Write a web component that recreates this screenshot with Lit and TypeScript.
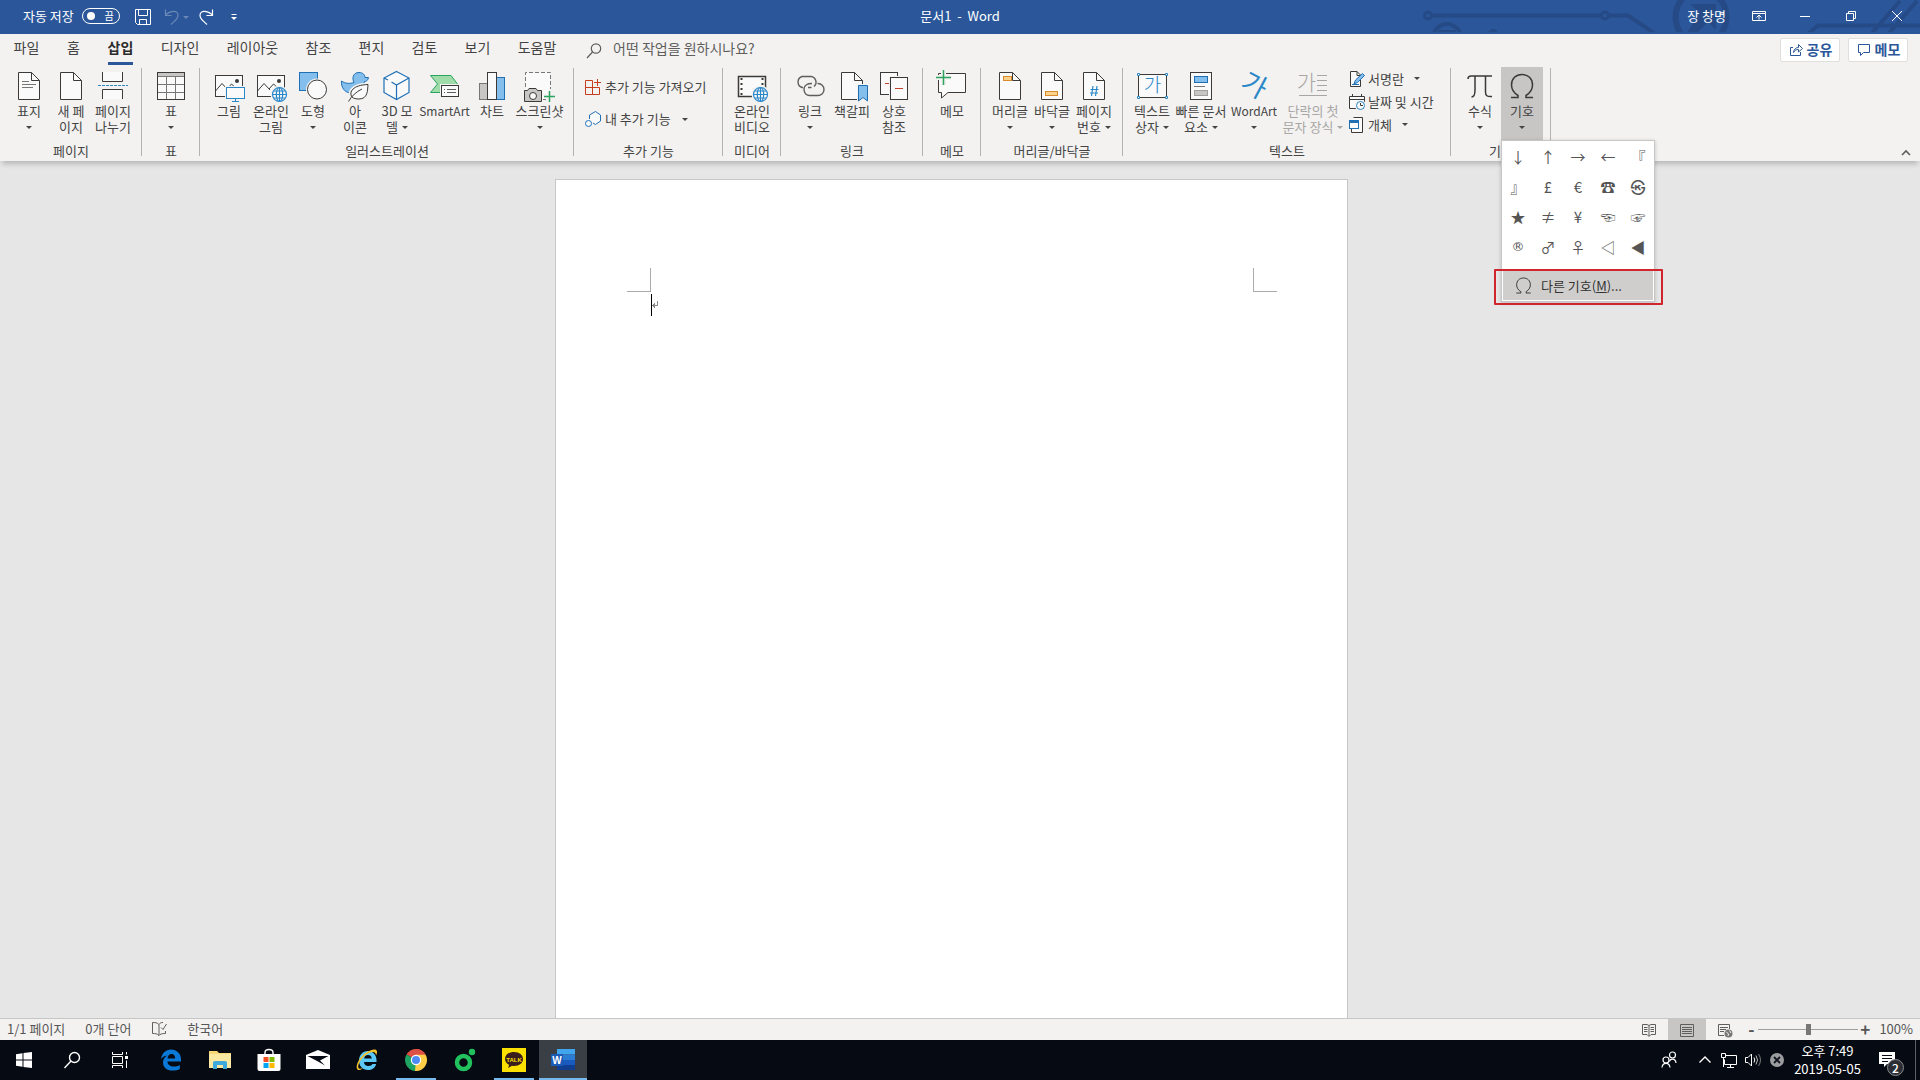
import { LitElement, html, svg, css, nothing, TemplateResult, SVGTemplateResult } from "lit";
import { customElement, property } from "lit/decorators.js";
import { classMap } from "lit/directives/class-map.js";

/* ---------- shared icon parts ---------- */

const INK = "#3b3a39";
const BLUE = "#2b88c8";
const DEEP = "#1f6fb5";
const SKY = "#83beec";
const GREEN = "#2ba55d";
const PAPER = "#fafafa";

const sheet = svg`
  <path d="M5.5 2.5H18.5L26.5 10.5V29.5H5.5Z" fill=${PAPER} stroke=${INK}/>
  <path d="M18.5 2.5V10.5H26.5" fill="none" stroke=${INK}/>`;

const globe = svg`
  <circle cx="24.5" cy="24.5" r="9" fill="#f3f2f1"/>
  <g fill=${PAPER} stroke=${BLUE} stroke-width="1.2">
    <circle cx="24.5" cy="24.5" r="7"/>
    <ellipse cx="24.5" cy="24.5" rx="3.2" ry="7"/>
    <path d="M17.5 24.5H31.5M18.5 21H30.5M18.5 28H30.5M24.5 17.5V31.5" fill="none"/>
  </g>`;

const landscape = svg`
  <rect x="2.5" y="5.5" width="27" height="21" fill=${PAPER} stroke=${INK}/>
  <path d="M2.5 21L9 13.5L15 20M14 19L18.5 14L24 19" fill="none" stroke=${INK}/>
  <circle cx="24" cy="11" r="2" fill=${INK}/>`;

const omega = svg`<path d="M5 27.5H12V25.5C8 23 5.5 19.5 5.5 15C5.5 8.5 10 4.5 16 4.5S26.5 8.5 26.5 15C26.5 19.5 24 23 20 25.5V27.5H27" fill="none" stroke=${INK} stroke-width="1.5"/>`;

const big: Record<string, SVGTemplateResult> = {
  cover: svg`${sheet}<path d="M9 11.5H16M9 14.5H23M9 17.5H20" stroke="#797775" fill="none"/>`,
  blank: sheet,
  pageBreak: svg`
    <path d="M5.5 2V11.5H25.5V2" fill=${PAPER} stroke=${INK}/>
    <path d="M5.5 29V19.5H25.5V29" fill=${PAPER} stroke=${INK}/>
    <path d="M1 15.5H31" stroke=${BLUE} stroke-dasharray="3 1"/>`,
  table: svg`
    <rect x="2.5" y="2.5" width="27" height="27" fill=${PAPER}/>
    <rect x="2.5" y="2.5" width="27" height="4" fill="#c8c6c4"/>
    <path d="M2.5 6.5H29.5M2.5 14.5H29.5M2.5 22.5H29.5M11.5 6.5V29.5M20.5 6.5V29.5" stroke="#797775"/>
    <rect x="2.5" y="2.5" width="27" height="27" fill="none" stroke=${INK}/>`,
  picture: svg`${landscape}
    <rect x="12" y="16" width="21" height="14" fill="#f3f2f1"/>
    <rect x="13.5" y="17.5" width="18" height="11" fill=${PAPER} stroke=${BLUE}/>
    <path d="M22.5 28.5V31.5M19 31.5H26" stroke=${BLUE}/>`,
  onlinePicture: svg`${landscape}${globe}`,
  shapes: svg`
    <rect x="2.5" y="2.5" width="18" height="18" fill=${SKY} stroke=${DEEP}/>
    <circle cx="20" cy="19.5" r="11" fill="#f3f2f1"/>
    <circle cx="20" cy="19.5" r="9.5" fill=${PAPER} stroke=${INK}/>`,
  icons: svg`
    <path d="M2.5 11C6 13.5 10 14 15 12.5C13 9 13.5 2.5 20 2.5C24 2.5 26 5 26 7.5L29.5 7.5C29 10.5 27 11.5 25 12C28 19 20 24 11 23C5 22 2 17 2.5 11Z" fill=${SKY} stroke=${DEEP}/>
    <path d="M13 27C9.5 22 14 15 29 14.5C28.5 20 29 29 20 29C17 29 14.5 28.5 13 27Z" fill=${PAPER} stroke="#f3f2f1" stroke-width="4"/>
    <path d="M13 27C9.5 22 14 15 29 14.5C28.5 20 29 29 20 29C17 29 14.5 28.5 13 27Z" fill=${PAPER} stroke=${INK}/>
    <path d="M9.5 31.5C13 25.5 17 22 23 19" fill="none" stroke=${INK}/>`,
  cube: svg`
    <path d="M15.5 1.5L28 8V22.5L15.5 29.5L3 22.5V8Z" fill=${PAPER} stroke=${DEEP} stroke-width="1.2"/>
    <path d="M3 8L7 10M10.5 12L15.5 15L28 8M15.5 15V29.5" fill="none" stroke=${DEEP} stroke-width="1.2"/>`,
  smartArt: svg`
    <path d="M1.5 5.5H22L28.5 14L22 22.5H1.5L8.5 14Z" fill="#9fdcaa" stroke=${GREEN}/>
    <rect x="11" y="14" width="20" height="15" fill="#f3f2f1"/>
    <rect x="12.5" y="15.5" width="17" height="11" fill=${PAPER} stroke=${INK}/>
    <path d="M15 19.5H16M18 19.5H27M15 22.5H16M18 22.5H27" stroke="#605e5c"/>`,
  chart: svg`
    <rect x="3.5" y="13.5" width="8" height="16" fill="#c8c6c4" stroke="#797775"/>
    <rect x="20.5" y="7.5" width="8" height="22" fill=${SKY} stroke=${DEEP}/>
    <rect x="11.5" y="2.5" width="9" height="27" fill=${PAPER} stroke=${INK}/>`,
  screenshot: svg`
    <path d="M1.5 17V2.5H26.5V29.5H1.5Z" fill=${PAPER}/>
    <path d="M1.5 17V2.5H26.5V19M19 29.5H22" fill="none" stroke="#797775" stroke-dasharray="4 2"/>
    <path d="M20 26.5H31M25.5 21V32" stroke="#f3f2f1" stroke-width="4"/>
    <path d="M0.5 20.5H3.5L5 18.5H12L13.5 20.5H17.5V31.5H0.5Z" fill="#c8c6c4" stroke=${INK}/>
    <circle cx="9" cy="26" r="3.5" fill=${PAPER} stroke=${INK}/>
    <path d="M20 26.5H31M25.5 21V32" stroke=${GREEN} stroke-width="1.5"/>`,
  onlineVideo: svg`
    <rect x="2.5" y="6.5" width="27" height="20" fill=${PAPER} stroke=${INK} stroke-width="1.5"/>
    <path d="M5.5 8V26M26.5 8V18" stroke=${INK} stroke-width="2" stroke-dasharray="2 3"/>
    ${globe}`,
  link: svg`
    <g fill="none" stroke="#605e5c" stroke-width="1.4">
      <path d="M9 17.5H8A5.8 5.8 0 0 1 8 6.5H17A5.7 5.7 0 0 1 20 16.5M17.5 17.5H14"/>
      <path d="M23.5 13.5H24A5.8 5.8 0 0 1 24 25.5H15.5A5.9 5.9 0 0 1 13 14.5Q14 13.5 18 13.5"/>
    </g>`,
  bookmark: svg`${sheet}
    <path d="M21 14H33V32H21Z" fill="#f3f2f1"/>
    <path d="M22.5 15.5H31.5V31L27 27.5L22.5 31Z" fill=${SKY} stroke=${DEEP}/>`,
  crossRef: svg`
    <rect x="2.5" y="2.5" width="17" height="22" fill=${PAPER} stroke=${INK}/>
    <path d="M7 13.5H11" stroke="#c8402a"/>
    <rect x="11" y="6" width="20" height="25" fill="#f3f2f1"/>
    <rect x="12.5" y="7.5" width="17" height="22" fill=${PAPER} stroke=${INK}/>
    <path d="M17 18.5H25" stroke="#c8402a"/>`,
  comment: svg`
    <path d="M2.5 3.5H29.5V22.5H12L5.5 28V22.5H2.5Z" fill=${PAPER} stroke=${INK}/>
    <path d="M0 7.5H15M7.5 0V15" stroke="#f3f2f1" stroke-width="5"/>
    <path d="M0 7.5H15M7.5 0V15" stroke=${GREEN} stroke-width="1.5"/>`,
  header: svg`${sheet}<rect x="9.5" y="6.5" width="8" height="4" fill="#fbd28b" stroke="#d88a2e"/>`,
  footer: svg`${sheet}<rect x="9.5" y="21.5" width="12" height="4" fill="#fbd28b" stroke="#d88a2e"/>`,
  pageNumber: svg`${sheet}<path d="M15 16L13.5 26M19 16L17.5 26M12.5 19.5H20.5M12 23H20" stroke=${BLUE} fill="none" stroke-width="1.2"/>`,
  textBox: svg`
    <rect x="2.5" y="4.5" width="28" height="23" fill=${PAPER} stroke=${INK}/>
    <text x="16.5" y="22" text-anchor="middle" font-size="19" font-weight="300" fill=${BLUE}>가</text>
    <path d="M1.5 3.5h2v2h-2zM29.5 3.5h2v2h-2zM1.5 26.5h2v2h-2zM29.5 26.5h2v2h-2z" fill=${PAPER} stroke=${BLUE}/>`,
  quickParts: svg`
    <rect x="5.5" y="2.5" width="21" height="27" fill=${PAPER} stroke=${INK}/>
    <rect x="9.5" y="6.5" width="13" height="6" fill=${SKY} stroke=${DEEP}/>
    <path d="M9 16.5H20" stroke="#797775"/>
    <rect x="9.5" y="20.5" width="13" height="5" fill="#c8c6c4" stroke="#a19f9d"/>`,
  wordArt: svg`<text transform="rotate(28 16 16)" x="16" y="25" text-anchor="middle" font-size="27" font-weight="400" fill=${BLUE}>가</text>`,
  dropCap: svg`
    <text x="9.5" y="20" text-anchor="middle" font-size="21" font-weight="300" fill="#a8a6a4">가</text>
    <path d="M20 5.5H30M20 10.5H30M20 15.5H30M20 20.5H30M2 25.5H30" stroke="#a8a6a4"/>`,
  equation: svg`<path d="M4 9C4 7 5 6 7 6H28M11 6V20C11 25 10 27 7.5 27M21.5 6V22C21.5 25.5 23 27 28 26.5" fill="none" stroke=${INK} stroke-width="1.5"/>`,
  symbol: omega,
};

/* 16-unit icons */
const small: Record<string, SVGTemplateResult> = {
  getAddins: svg`<g fill="none" stroke="#c43e1c"><path d="M7.5 1.5H0.5V15.5H14.5V8.5H0.5M7.5 1.5V15.5"/><path d="M12.5 0V7M9 3.5H16"/></g>`,
  myAddins: svg`<g fill=${PAPER} stroke=${DEEP}><path d="M4.5 8V4L10.5 0.5L15.5 4V10L10.5 13.5L8 12" /><circle cx="3.5" cy="12.5" r="3"/></g>`,
  signature: svg`
    <path d="M1.5 0.5H8L11.5 4V15.5H1.5Z" fill=${PAPER} stroke=${INK}/>
    <path d="M8 0.5V4.5H11.5" fill="none" stroke=${INK}/>
    <path d="M5 13L6.5 9L13.5 2.5L15.5 4.5L8.5 11.5Z" fill=${SKY} stroke=${DEEP}/><path d="M3 13.5H10" stroke=${DEEP}/>`,
  dateTime: svg`
    <path d="M0.5 2.5H15.5V14.5H0.5ZM0.5 5.5H15.5M3.5 0V3M12.5 0V3" fill=${PAPER} stroke=${INK}/>
    <circle cx="11.5" cy="11.5" r="5.5" fill="#f3f2f1"/>
    <circle cx="11.5" cy="11.5" r="4" fill=${PAPER} stroke=${BLUE}/><path d="M11.5 9V11.5H14" fill="none" stroke=${INK}/>`,
  object: svg`
    <path d="M4.5 0.5H13.5V15.5H2.5V12" fill=${PAPER} stroke=${INK}/>
    <rect x="0.5" y="3.5" width="9" height="8" fill=${PAPER} stroke=${DEEP}/><path d="M1 5H9" stroke=${DEEP} stroke-width="2"/>`,
  share: svg`<g fill="none" stroke="#2b579a"><path d="M5 6.5H2.5V14.5H12.5V11"/><path d="M5.5 11.5C6 8 8 6.5 10.5 6.5V3.5L14.5 7.5L10.5 11V8.5C8 8.5 6.5 9.5 5.5 11.5Z"/></g>`,
  note: svg`<path d="M2.5 3.5H13.5V11.5H7.5L4.5 14.5V11.5H2.5Z" fill="none" stroke="#2b579a"/>`,
  search: svg`<g fill="none" stroke="#605e5c" stroke-width="1.2"><circle cx="10" cy="5.5" r="4.7"/><path d="M6.5 9L1 15"/></g>`,
  save: svg`<path d="M0.5 0.5H15.5V15.5H2.5L0.5 13.5ZM3.5 0.5V6.5H12.5V0.5M4.5 15.5V10.5H11.5V15.5" fill="none" stroke="#fff"/>`,
  undo: svg`<path d="M1.5 0.5V6.5H7.5M1.5 6.5C5 2 14 0 14 6.5C14 10 11 11.5 7 15.5" fill="none" stroke="#6b88b8" stroke-width="1.2"/>`,
  redo: svg`<path d="M14.5 0.5V6.5H8.5M14.5 6.5C11 2 2 0 2 6.5C2 10 5 11.5 9 15.5" fill="none" stroke="#fff" stroke-width="1.2"/>`,
  more: svg`<path d="M5.5 5.5H10.5" stroke="#fff"/><path d="M5 8H11L8 11Z" fill="#fff"/>`,
  display: svg`<path d="M1.5 3.5H14.5V12.5H1.5ZM1.5 5.5H14.5M8 11.5V7.5M5.5 9.5L8 7L10.5 9.5" fill="none" stroke="#fff"/>`,
  minimize: svg`<path d="M3 8.5H13" stroke="#fff"/>`,
  restore: svg`<path d="M3.5 5.5H10.5V12.5H3.5ZM5.5 5.5V3.5H12.5V10.5H10.5" fill="none" stroke="#fff"/>`,
  close: svg`<path d="M3 3L13 13M13 3L3 13" stroke="#fff"/>`,
  proof: svg`<g fill="none" stroke="#605e5c"><path d="M8 3.5C6 1.5 4 1.5 1.5 1.5V12.5C4 12.5 6 12.5 8 14.5C9 13 11 12.5 14.5 12.5V10M8 3.5V14.5M8 3.5C9 2 10 1.5 12 1.5"/><path d="M10 6.5L12 8.5L15.5 3"/></g>`,
  readMode: svg`<g fill="none" stroke="#605e5c"><path d="M8 3.5L6 2.5H1.5V12.5H6L8 14.5L10 12.5H14.5V2.5H10ZM8 3.5V14M3 5.5H6.5M3 7.5H6.5M3 9.5H6.5M9.5 5.5H13M9.5 7.5H13M9.5 9.5H13"/></g>`,
  printLayout: svg`<path d="M1.5 2.5H14.5V14.5H1.5ZM3 5.5H13M3 7.5H13M3 9.5H13M3 11.5H13" fill="none" stroke="#605e5c"/>`,
  webLayout: svg`<path d="M7 13.5H1.5V2.5H12.5V7M3 5.5H11M3 7.5H9M3 9.5H7" fill="none" stroke="#605e5c"/><circle cx="11.5" cy="11.5" r="4" fill="#797775"/><path d="M9 9.5L11.5 12L11 14M12.5 8.5L14 11" stroke="#f3f2f1" fill="none"/>`,
  collapse: svg`<path d="M4 10L8 6L12 10" fill="none" stroke="#605e5c" stroke-width="1.6"/>`,
};

/* 24-unit taskbar icons */
const task: Record<string, SVGTemplateResult> = {
  start: svg`<path d="M4 6.3L10.5 5.3V11.5H4ZM11.5 5.1L20 4V11.5H11.5ZM4 12.5H10.5V18.7L4 17.7ZM11.5 12.5H20V20L11.5 18.9Z" fill="#fff"/>`,
  search: svg`<g fill="none" stroke="#fff" stroke-width="1.4"><circle cx="14.5" cy="9.5" r="5"/><path d="M11 13L4.5 20"/></g>`,
  taskView: svg`<g fill="none" stroke="#fff"><path d="M4.5 8.5H14.5V15.5H4.5ZM4.5 4V6.5H14.5V4M4.5 20V17.5H14.5V20M18.5 4V6.5M18.5 12.5V20"/></g><rect x="17" y="8" width="3" height="3" fill="#fff"/>`,
  edge: svg`<path d="M2 11C3 5 7 1.5 12 1.5C18 1.5 22 6 22 11V13.5H8.5C8.5 17 11.5 18.5 14.5 18.5C17 18.5 19 18 20.8 17V21C19 22 16.5 22.6 13.5 22.6C7.5 22.6 4 19 4 14.5C4 11.5 5.5 9 8.5 7.5C5.5 7.8 3.5 9 2 11ZM8.5 10.5H16.2C16.2 8 15 6 12.5 6C10.2 6 8.8 8 8.5 10.5Z" fill="#0a78d7"/>`,
  folder: svg`<path d="M1 3H9L11 5H23V20H1Z" fill="#f8d775"/><path d="M1 6H23V20H1Z" fill="#fbe8a1"/><path d="M5 21V14.5Q5 13 7 13H17Q19 13 19 14.5V21H15V17H9V21Z" fill="#3fa9dc"/>`,
  store: svg`<path d="M8 7V4.5C8 .5 16 .5 16 4.5V7" fill="none" stroke="#fff" stroke-width="1.4"/><path d="M.5 6H23.5V21Q23.5 23 21.5 23H2.5Q.5 23 .5 21Z" fill="#fff"/><rect x="6.5" y="9" width="5" height="5" fill="#f25022"/><rect x="12.5" y="9" width="5" height="5" fill="#7fba00"/><rect x="6.5" y="15" width="5" height="5" fill="#00a4ef"/><rect x="12.5" y="15" width="5" height="5" fill="#ffb900"/>`,
  mail: svg`<path d="M0 7L12 2L24 7V21H0Z" fill="#fff"/><path d="M1.5 8L22.5 8L14 12.5L19 17.5L12 13.5Z" fill="#060a12"/>`,
  ie: svg`<path d="M12.5 3C18 3 21.5 7 21.5 12V14H9C9.2 17 11.5 18 13.5 18C15.5 18 17 17 17.5 16H21.2C20 20 17 22 13 22C7.5 22 4 18 4 12.5S8 3 12.5 3ZM9.2 10.5H16.8C16.5 8 15 7 13 7S9.5 8 9.2 10.5Z" fill="#5bc8f5"/><path d="M2.5 21.5C-.5 18 5 8 12 4C17 1 21.5 .5 22 3.5C22.2 4.8 21.7 6 21 7.5C21 4.5 19 3 14 5C7 8 2 17 3.5 20C4 21 6 21 8 19.5C6 22 4 22.8 2.5 21.5Z" fill="#f6c22b"/>`,
  chrome: svg`<path d="M12 12L2.5 6.5A11 11 0 0 1 21.5 6.5Z" fill="#dd5144"/><path d="M12 12L2.5 6.5A11 11 0 0 0 11 23L16.5 14.5Z" fill="#1da462"/><path d="M12 12V6.5H21.5A11 11 0 0 1 11 23Z" fill="#ffcd46"/><path d="M12 1A11 11 0 0 1 21.5 6.5H12Z" fill="#dd5144"/><circle cx="12" cy="12" r="5.2" fill="#fff"/><circle cx="12" cy="12" r="4" fill="#4c8bf5"/>`,
  ring: svg`<circle cx="10.5" cy="14.5" r="6.5" fill="none" stroke="#21c25e" stroke-width="4.5"/><circle cx="19" cy="4" r="3.2" fill="#21c25e"/>`,
  talk: svg`<rect width="24" height="24" fill="#fae100"/><path d="M12 4C6.5 4 3 7 3 11C3 13.5 4.5 15.5 7 16.7L6.3 20L10 17.8C10.6 17.9 11.3 18 12 18C17.5 18 21 15 21 11S17.5 4 12 4Z" fill="#3a1d1d"/><text x="12" y="13.5" text-anchor="middle" font-family="Liberation Sans" font-weight="700" font-size="6" fill="#fae100">TALK</text>`,
  word: svg`<path d="M6 1H24V6.5H6Z" fill="#41a5ee"/><path d="M6 6.5H24V12H6Z" fill="#2b7cd3"/><path d="M6 12H24V17H6Z" fill="#185abd"/><path d="M6 17H24V22H6Z" fill="#103f91"/><rect y="6" width="12" height="12" fill="#1b5bb8"/><text x="6" y="15.5" text-anchor="middle" font-family="Liberation Sans" font-weight="700" font-size="10" fill="#fff">W</text>`,
  people: svg`<g fill="none" stroke="#fff" stroke-width="1.2"><circle cx="15.5" cy="7" r="3"/><path d="M12.5 13.5C13 10.5 18.5 9.5 19 15"/><circle cx="9" cy="12" r="3"/><path d="M5 19.5C5.5 14 12.5 14 13 19.5"/></g>`,
  chevron: svg`<path d="M6.5 14.5L12 9L17.5 14.5" fill="none" stroke="#fff" stroke-width="1.4"/>`,
  network: svg`<g fill="none" stroke="#fff"><path d="M9 7.5H19.5V16.5H7.5V11.5M10 19.5H17M13.5 16.5V19.5M4.5 5.5H8.5V9.5H4.5ZM6.5 9.5V19"/></g>`,
  volume: svg`<g fill="none" stroke="#fff"><path d="M4.5 9.5H7L10.5 6V18L7 14.5H4.5ZM13 9.5Q14.5 12 13 14.5"/><path d="M15 7.5Q18 12 15 16.5" stroke="#bbb"/><path d="M17.5 6Q21.5 12 17.5 18" stroke="#777"/></g>`,
  blocked: svg`<circle cx="12" cy="12" r="7" fill="#9b9da0"/><path d="M9 9L15 15M15 9L9 15" stroke="#10141c" stroke-width="1.8"/>`,
  action: svg`<path d="M4 4H20V16H12L9 19V16H4Z" fill="#fff"/><path d="M7 7.5H17M7 10.5H17M7 13.5H13" stroke="#060a12"/>`,
};

/* ---------- icon element ---------- */

@customElement("ui-icon")
class UiIcon extends LitElement {
  @property() name = "";
  @property() kind: "big" | "small" | "task" = "small";

  static styles = css`
    :host { display: block; flex: none; }
    svg { display: block; overflow: visible; font-family: "Noto Sans CJK KR", sans-serif; }
  `;

  render() {
    const [set, size] = this.kind === "big" ? [big, 32] : this.kind === "task" ? [task, 24] : [small, 16];
    return html`<svg width=${size} height=${size} viewBox="0 0 ${size} ${size}" aria-hidden="true">${set[this.name]}</svg>`;
  }
}

/* ---------- title bar ---------- */

@customElement("title-bar")
class TitleBar extends LitElement {
  static styles = css`
    :host { display: block; position: relative; background: #2b579a; color: #fff; font-size: 13px; line-height: 16px; }
    .art { position: absolute; right: 0; top: 0; }
    .bar { position: relative; display: grid; grid-template-columns: 1fr auto 1fr; align-items: center; height: 34px; padding-bottom: 2px; box-sizing: border-box; }
    .quick { display: flex; align-items: center; padding: 2px 0 0 23px; }
    .auto { display: flex; align-items: center; gap: 8px; margin-right: 15px; padding-bottom: 2px; }
    button { font: inherit; color: inherit; background: none; border: 0; padding: 0; }
    .toggle { display: flex; align-items: center; justify-content: space-between; width: 38px; height: 16px; box-sizing: border-box; border: 1px solid #fff; border-radius: 8px; padding: 0 5px 0 4px; font-size: 10px; line-height: 14px; }
    .knob { width: 8px; height: 8px; border-radius: 50%; background: #fff; }
    .undo { display: flex; align-items: center; gap: 3px; margin: 0 9px 0 13px; }
    .caret { border: 3px solid transparent; border-top-color: #6b88b8; border-bottom: 0; }
    .more { margin-left: 12px; }
    h1 { margin: 0; font: inherit; white-space: pre; }
    .right { display: flex; align-items: center; justify-content: flex-end; }
    .win { display: flex; justify-content: center; align-items: center; width: 46px; height: 32px; }
    .user { margin-right: 10px; }
  `;

  render() {
    return html`
      <svg class="art" width="520" height="32" fill="none" stroke="#254a86" stroke-width="4" aria-hidden="true">
        <circle cx="28" cy="15.5" r="3.5" stroke-width="3"/>
        <path d="M32 15.5H201M209 15.5H228L254 33"/>
        <circle cx="205" cy="15.5" r="3.5" stroke-width="3"/>
        <circle cx="47" cy="38" r="14"/><path d="M38 31H56" stroke-width="2"/>
        <circle cx="93" cy="34" r="5" fill="#254a86" stroke="none"/>
        <path d="M284 -3A28 28 0 0 0 284 37M318 -3A28 28 0 0 1 318 37" stroke-width="6"/>
        <path d="M290 4H316V30L308 22L296 34H286L300 13Z" fill="#254a86" stroke="none"/>
        <path d="M409 33L418 25.5H520M472 33L500 1M489 33L517 1"/>
      </svg>
      <div class="bar">
        <div class="quick">
          <label class="auto">자동 저장 <button class="toggle" role="switch" aria-checked="false"><span class="knob"></span>끔</button></label>
          <button aria-label="저장"><ui-icon name="save"></ui-icon></button>
          <button class="undo" aria-label="실행 취소"><ui-icon name="undo"></ui-icon><span class="caret"></span></button>
          <button aria-label="다시 실행"><ui-icon name="redo"></ui-icon></button>
          <button class="more" aria-label="빠른 실행 도구 모음 사용자 지정"><ui-icon name="more"></ui-icon></button>
        </div>
        <h1>문서1  -  Word</h1>
        <div class="right">
          <button class="user">장 창명</button>
          <button class="win" aria-label="리본 메뉴 표시 옵션"><ui-icon name="display"></ui-icon></button>
          <button class="win" aria-label="최소화"><ui-icon name="minimize"></ui-icon></button>
          <button class="win" aria-label="이전 크기로"><ui-icon name="restore"></ui-icon></button>
          <button class="win" aria-label="닫기"><ui-icon name="close"></ui-icon></button>
        </div>
      </div>`;
  }
}

/* ---------- tab strip ---------- */

const TABS = ["파일", "홈", "삽입", "디자인", "레이아웃", "참조", "편지", "검토", "보기", "도움말"];

@customElement("tab-strip")
class TabStrip extends LitElement {
  static styles = css`
    :host { display: flex; align-items: center; height: 33px; background: #f3f2f1; color: #444; font-size: 14px; line-height: 20px; }
    nav { display: flex; height: 28px; }
    button { font: inherit; color: inherit; background: none; border: 0; padding: 0; }
    .tab { display: flex; justify-content: center; width: 53px; }
    .len1 { width: 41px; }
    .len3 { width: 66px; }
    .len4 { width: 79px; }
    .name { padding: 0 0 3px; border-bottom: 3px solid transparent; }
    .on .name { color: #2b2b2b; font-weight: 700; border-color: #2b579a; }
    .tell { display: flex; align-items: center; gap: 11px; flex: 1; margin-left: 16px; height: 28px; }
    .tell input { flex: 1; font: inherit; color: #605e5c; background: none; border: 0; padding: 0 0 5px; outline: 0; }
    .tell input::placeholder { color: #605e5c; opacity: 1; }
    .actions { display: flex; gap: 8px; padding: 0 12px 2px 0; }
    .action { display: flex; align-items: center; justify-content: center; gap: 3px; box-sizing: border-box; width: 60px; height: 24px; background: #fff; border: 1px solid #e1dfdd; border-radius: 2px; color: #2b579a; font-weight: 700; padding-bottom: 2px; }
  `;

  render() {
    return html`
      <nav role="tablist">
        ${TABS.map((t) => html`<button role="tab" class="tab len${t.length} ${t === "삽입" ? "on" : ""}"><span class="name">${t}</span></button>`)}
      </nav>
      <label class="tell"><ui-icon name="search"></ui-icon><input type="text" placeholder="어떤 작업을 원하시나요?" aria-label="어떤 작업을 원하시나요?"></label>
      <div class="actions">
        <button class="action"><ui-icon name="share"></ui-icon>공유</button>
        <button class="action"><ui-icon name="note"></ui-icon>메모</button>
      </div>`;
  }
}

/* ---------- ribbon ---------- */

interface Cmd {
  icon: string;
  lines: string[];
  caret?: "below" | "inline";
  size?: "m" | "l" | "s" | "xl";
  state?: "pressed" | "disabled";
}
interface Mini { icon: string; text: string; caret?: boolean; }
interface Group { label: string; cmds?: Cmd[]; minis?: Mini[]; wide?: boolean; menu?: boolean; }

const GROUPS: Group[] = [
  { label: "페이지", cmds: [
    { icon: "cover", lines: ["표지"], caret: "below" },
    { icon: "blank", lines: ["새 페", "이지"] },
    { icon: "pageBreak", lines: ["페이지", "나누기"] } ] },
  { label: "표", cmds: [{ icon: "table", lines: ["표"], caret: "below" }] },
  { label: "일러스트레이션", cmds: [
    { icon: "picture", lines: ["그림"] },
    { icon: "onlinePicture", lines: ["온라인", "그림"] },
    { icon: "shapes", lines: ["도형"], caret: "below" },
    { icon: "icons", lines: ["아", "이콘"] },
    { icon: "cube", lines: ["3D 모", "델"], caret: "inline" },
    { icon: "smartArt", lines: ["SmartArt"], size: "m" },
    { icon: "chart", lines: ["차트"] },
    { icon: "screenshot", lines: ["스크린샷"], caret: "below", size: "m" } ] },
  { label: "추가 기능", wide: true, minis: [
    { icon: "getAddins", text: "추가 기능 가져오기" },
    { icon: "myAddins", text: "내 추가 기능", caret: true } ] },
  { label: "미디어", cmds: [{ icon: "onlineVideo", lines: ["온라인", "비디오"] }] },
  { label: "링크", cmds: [
    { icon: "link", lines: ["링크"], caret: "below" },
    { icon: "bookmark", lines: ["책갈피"] },
    { icon: "crossRef", lines: ["상호", "참조"] } ] },
  { label: "메모", cmds: [{ icon: "comment", lines: ["메모"] }] },
  { label: "머리글/바닥글", cmds: [
    { icon: "header", lines: ["머리글"], caret: "below" },
    { icon: "footer", lines: ["바닥글"], caret: "below" },
    { icon: "pageNumber", lines: ["페이지", "번호"], caret: "inline" } ] },
  { label: "텍스트", cmds: [
    { icon: "textBox", lines: ["텍스트", "상자"], caret: "inline" },
    { icon: "quickParts", lines: ["빠른 문서", "요소"], caret: "inline", size: "l" },
    { icon: "wordArt", lines: ["WordArt"], caret: "below", size: "s" },
    { icon: "dropCap", lines: ["단락의 첫", "문자 장식"], caret: "inline", size: "xl", state: "disabled" } ],
    minis: [
      { icon: "signature", text: "서명란", caret: true },
      { icon: "dateTime", text: "날짜 및 시간" },
      { icon: "object", text: "개체", caret: true } ] },
  { label: "기호", menu: true, cmds: [
    { icon: "equation", lines: ["수식"], caret: "below" },
    { icon: "symbol", lines: ["기호"], caret: "below", state: "pressed" } ] },
];

const SYMBOLS = ["↓", "↑", "→", "←", "『", "』", "£", "€", "☎", "㉿", "★", "≠", "¥", "☜", "☞", "®", "♂", "♀", "◁", "◀"];

@customElement("symbol-menu")
class SymbolMenu extends LitElement {
  static styles = css`
    :host { display: block; position: relative; box-sizing: border-box; width: 154px; background: #fff; border: 1px solid #c8c6c4; box-shadow: 0 1px 4px rgba(0, 0, 0, 0.2); padding: 1px; }
    .grid { display: grid; grid-template-columns: repeat(5, 30px); grid-auto-rows: 30px; margin-bottom: 9px; }
    button { font: inherit; color: #555; background: none; border: 0; padding: 0; }
    .sym { display: flex; align-items: center; justify-content: center; font-size: 15px; line-height: 18px; }
    .round { font-family: "DejaVu Sans", sans-serif; font-size: 13px; }
    .other { display: flex; align-items: center; gap: 9px; width: 100%; height: 29px; padding-left: 12px; background: #d0cecc; color: #333; font-size: 13px; line-height: 16px; }
    .omega { display: block; }
    .mark { position: absolute; left: -8px; right: -9px; bottom: -4px; height: 32px; border: 2px solid #d0252c; border-radius: 1px; pointer-events: none; }
  `;

  render() {
    return html`
      <div class="grid">${SYMBOLS.map((s) => html`<button class=${classMap({ sym: true, round: s === "®" })}>${s}</button>`)}</div>
      <button class="other"><svg class="omega" width="17" height="17" viewBox="3 3 26 26" aria-hidden="true">${omega}</svg><span>다른 기호(<u>M</u>)...</span></button>
      <div class="mark"></div>`;
  }
}

@customElement("ribbon-panel")
class RibbonPanel extends LitElement {
  static styles = css`
    :host { display: flex; position: relative; z-index: 2; height: 94px; background: #f3f2f1; color: #444; font-size: 13px; line-height: 16px; box-shadow: 0 5px 5px -2px rgba(0, 0, 0, 0.2); }
    .group { position: relative; display: flex; flex-direction: column; padding: 0 7px 0 8px; border-right: 1px solid transparent; }
    .group::after { content: ""; position: absolute; right: -1px; top: 1px; bottom: 5px; width: 1px; background: #b5b3b1; }
    .row { display: flex; height: 73px; }
    .caption { margin: 3px 0 0; text-align: center; white-space: nowrap; }
    button { font: inherit; color: inherit; background: none; border: 0; padding: 0; }
    .cmd { display: flex; flex-direction: column; align-items: center; width: 42px; padding-top: 3px; white-space: nowrap; }
    .cmd.s { width: 50px; }
    .cmd.m { width: 53px; }
    .cmd.l { width: 56px; }
    .cmd.xl { width: 68px; }
    .pressed { background: #c8c6c4; }
    .disabled { color: #a8a6a4; }
    .text { margin-top: 1px; display: flex; flex-direction: column; align-items: center; }
    .line { display: flex; align-items: center; gap: 4px; height: 16px; }
    .latin { font-size: 12px; }
    .caret { border: 3px solid transparent; border-top-color: currentColor; border-bottom: 0; }
    .minis { display: flex; flex-direction: column; padding-left: 2px; width: 94px; }
    .minis.wide { width: 130px; padding-left: 3px; padding-top: 4px; }
    .mini { display: flex; align-items: center; gap: 3px; height: 23px; white-space: nowrap; }
    .wide .mini { height: 32px; gap: 4px; }
    .mini .caret { margin-left: 7px; }
    .fold { align-self: flex-end; margin: 0 6px 0 auto; }
    .menu { position: absolute; left: 50px; top: 73px; z-index: 3; }
  `;

  private cmd(c: Cmd): TemplateResult {
    const caret = html`<span class="caret"></span>`;
    return html`
      <button class="cmd ${c.size ?? ""} ${c.state ?? ""}" ?disabled=${c.state === "disabled"}>
        <ui-icon kind="big" name=${c.icon}></ui-icon>
        <span class="text">
          ${c.lines.map((l, i) => html`<span class=${classMap({ line: true, latin: /^[A-Za-z]+$/.test(l) })}>${l}${c.caret === "inline" && i === c.lines.length - 1 ? caret : nothing}</span>`)}
          ${c.caret === "below" ? html`<span class="line">${caret}</span>` : nothing}
        </span>
      </button>`;
  }

  render() {
    return html`
      ${GROUPS.map((g) => html`
        <section class="group">
          <div class="row">
            ${(g.cmds ?? []).map((c) => this.cmd(c))}
            ${g.minis ? html`<div class=${classMap({ minis: true, wide: !!g.wide })}>
              ${g.minis.map((m) => html`<button class="mini"><ui-icon name=${m.icon}></ui-icon>${m.text}${m.caret ? html`<span class="caret"></span>` : nothing}</button>`)}
            </div>` : nothing}
          </div>
          <p class="caption">${g.label}</p>
          ${g.menu ? html`<symbol-menu class="menu"></symbol-menu>` : nothing}
        </section>`)}
      <button class="fold" aria-label="리본 메뉴 축소"><ui-icon name="collapse"></ui-icon></button>`;
  }
}

/* ---------- document area ---------- */

@customElement("document-view")
class DocumentView extends LitElement {
  static styles = css`
    :host { display: flex; flex: 1; min-height: 0; justify-content: center; overflow: hidden; background: #e6e6e6; padding: 18px 17px 0 0; }
    .page { box-sizing: border-box; width: 793px; background: #fff; border: 1px solid #c6c6c6; border-bottom: 0; padding: 88px 70px 0 71px; }
    .corners { display: flex; justify-content: space-between; }
    .corner { box-sizing: border-box; width: 24px; height: 24px; border: 0 solid #ababab; border-bottom-width: 1px; }
    .left { border-right-width: 1px; }
    .right { border-left-width: 1px; }
    .para { display: flex; align-items: center; margin: 2px 0 0 24px; height: 22px; }
    .cursor { width: 1px; height: 22px; background: #000; }
  `;

  render() {
    return html`
      <main class="page">
        <div class="corners"><span class="corner left"></span><span class="corner right"></span></div>
        <div class="para">
          <span class="cursor"></span>
          <svg width="7" height="8" aria-hidden="true"><path d="M5.5 0V4.5H0M2.5 2V7M1.5 3V6" fill="none" stroke="#8a8886"/></svg>
        </div>
      </main>`;
  }
}

/* ---------- status bar ---------- */

@customElement("status-bar")
class StatusBar extends LitElement {
  static styles = css`
    :host { display: flex; justify-content: space-between; align-items: stretch; height: 21px; border-top: 1px solid #c6c6c6; background: #f3f2f1; color: #555; font-size: 13px; line-height: 18px; }
    div { display: flex; align-items: center; }
    button { font: inherit; color: inherit; background: none; border: 0; padding: 0; }
    .info { gap: 20px; padding: 0 0 2px 7px; }
    .view { display: flex; align-items: center; justify-content: center; width: 38px; height: 21px; }
    .on { background: #c8c6c4; }
    .step { width: 14px; font-size: 17px; font-weight: 700; text-align: center; padding-bottom: 2px; }
    input { appearance: none; width: 100px; height: 12px; margin: 0; background: linear-gradient(#a19f9d, #a19f9d) center / 100% 1px no-repeat; }
    input::-webkit-slider-thumb { appearance: none; width: 5px; height: 11px; background: #797775; border: 0; }
    .zoom { padding-right: 7px; }
    .pct { margin-left: 7px; padding-bottom: 2px; }
  `;

  render() {
    return html`
      <div class="info">
        <button>1/1 페이지</button><button>0개 단어</button>
        <button aria-label="맞춤법 검사"><ui-icon name="proof"></ui-icon></button><button>한국어</button>
      </div>
      <div class="zoom">
        <button class="view" aria-label="읽기 모드"><ui-icon name="readMode"></ui-icon></button>
        <button class="view on" aria-label="인쇄 모양"><ui-icon name="printLayout"></ui-icon></button>
        <button class="view" aria-label="웹 모양"><ui-icon name="webLayout"></ui-icon></button>
        <button class="step" aria-label="축소">-</button>
        <input type="range" min="0" max="200" value="100" aria-label="확대/축소">
        <button class="step" aria-label="확대">+</button>
        <button class="pct">100%</button>
      </div>`;
  }
}

/* ---------- desktop taskbar ---------- */

const APPS = [
  ["edge", "Edge", ""], ["folder", "파일 탐색기", ""], ["store", "Store", ""], ["mail", "메일", ""],
  ["ie", "Internet Explorer", ""], ["chrome", "Chrome", "open"], ["ring", "네이버", ""],
  ["talk", "카카오톡", "open"], ["word", "Word", "open active"],
];

@customElement("task-bar")
class TaskBar extends LitElement {
  static styles = css`
    :host { display: flex; justify-content: space-between; height: 40px; background: #060a12; color: #fff; font-size: 13px; line-height: 18px; }
    div { display: flex; align-items: stretch; }
    button { font: inherit; color: inherit; background: none; border: 0; padding: 0; }
    .item { position: relative; display: flex; align-items: center; justify-content: center; width: 48px; }
    .apps { gap: 1px; padding-left: 3px; }
    .open::after { content: ""; position: absolute; left: 4px; right: 4px; bottom: 0; height: 2px; background: #76b9ed; }
    .active { background: #3a3e45; }
    .active::after { left: 0; right: 0; }
    .tray { display: flex; align-items: center; justify-content: center; width: 24px; }
    .people { margin-right: 12px; }
    .clock { display: flex; flex-direction: column; justify-content: center; align-items: center; width: 77px; padding-bottom: 1px; }
    .action { position: relative; display: flex; align-items: center; margin: 0 16px 0 9px; }
    .badge { position: absolute; left: 12px; top: 19px; box-sizing: border-box; width: 17px; height: 17px; border: 1px solid #8a8c90; border-radius: 50%; background: #2a2d33; font-size: 12px; font-weight: 500; line-height: 15px; text-align: center; }
    .desk { width: 5px; border-left: 1px solid #5c5f66; }
  `;

  render() {
    return html`
      <div>
        <button class="item" aria-label="시작"><ui-icon kind="task" name="start"></ui-icon></button>
        <button class="item" aria-label="검색"><ui-icon kind="task" name="search"></ui-icon></button>
        <button class="item" aria-label="작업 보기"><ui-icon kind="task" name="taskView"></ui-icon></button>
        <div class="apps">
          ${APPS.map(([i, label, state]) => html`<button class="item ${state}" aria-label=${label}><ui-icon kind="task" name=${i}></ui-icon></button>`)}
        </div>
      </div>
      <div>
        <button class="tray people" aria-label="피플"><ui-icon kind="task" name="people"></ui-icon></button>
        <button class="tray" aria-label="숨겨진 아이콘"><ui-icon kind="task" name="chevron"></ui-icon></button>
        <button class="tray" aria-label="네트워크"><ui-icon kind="task" name="network"></ui-icon></button>
        <button class="tray" aria-label="볼륨"><ui-icon kind="task" name="volume"></ui-icon></button>
        <button class="tray" aria-label="상태"><ui-icon kind="task" name="blocked"></ui-icon></button>
        <button class="clock"><span>오후 7:49</span><span>2019-05-05</span></button>
        <button class="action" aria-label="알림"><ui-icon kind="task" name="action"></ui-icon><span class="badge">2</span></button>
        <button class="desk" aria-label="바탕 화면 보기"></button>
      </div>`;
  }
}

/* ---------- root ---------- */

@customElement("app-root")
class AppRoot extends LitElement {
  static styles = css`
    :host { display: flex; flex-direction: column; height: 100vh; overflow: hidden; font-family: "Noto Sans CJK KR", "DejaVu Sans", sans-serif; }
    title-bar, tab-strip, ribbon-panel, status-bar, task-bar { flex: none; }
  `;

  render() {
    return html`
      <title-bar></title-bar>
      <tab-strip></tab-strip>
      <ribbon-panel></ribbon-panel>
      <document-view></document-view>
      <status-bar></status-bar>
      <task-bar></task-bar>`;
  }
}
